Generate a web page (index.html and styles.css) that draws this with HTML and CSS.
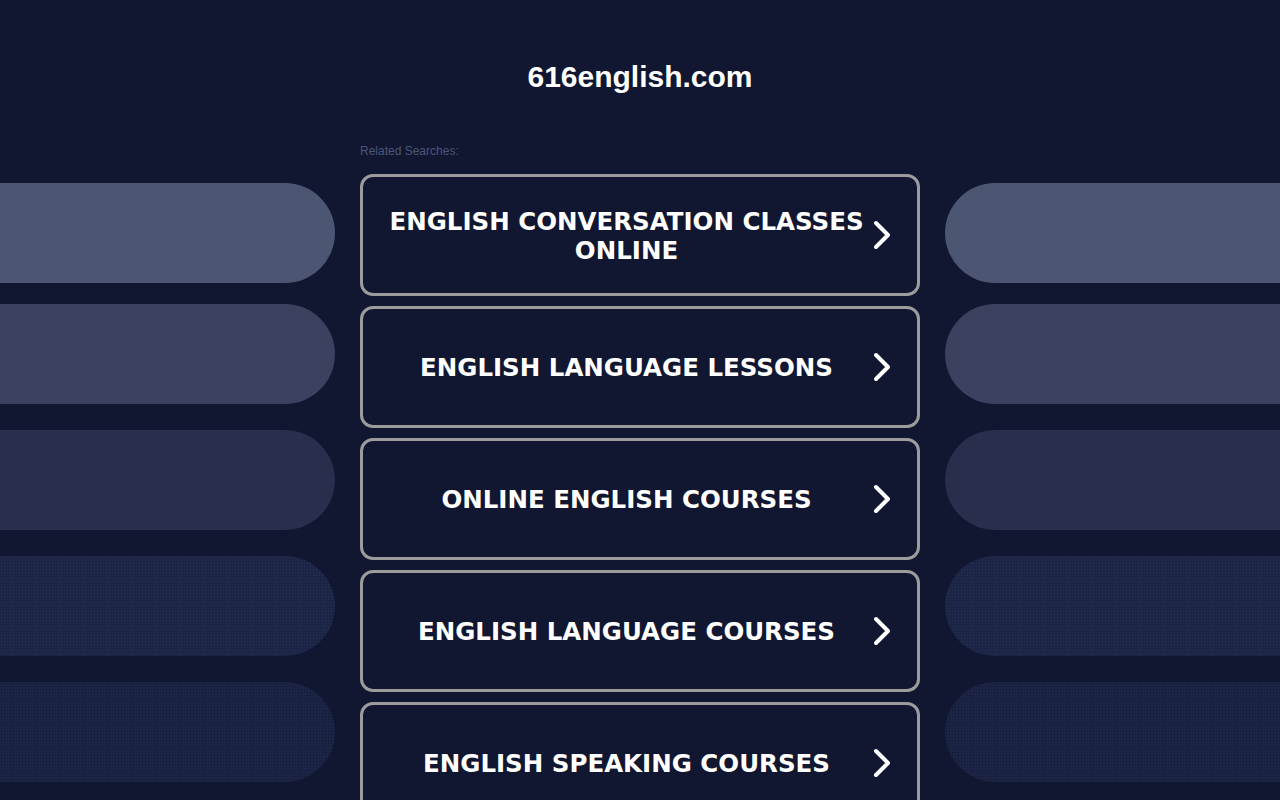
FILE: index.html
```html
<!DOCTYPE html>
<html>
<head>
<meta charset="utf-8">
<link rel="stylesheet" href="styles.css">
</head>
<body>
<div class="page">
  <div class="side side-left">
    <div class="pill p1"></div>
    <div class="pill p2"></div>
    <div class="pill p3"></div>
    <div class="pill p4"></div>
    <div class="pill p5"></div>
  </div>
  <main class="center">
    <h1 class="title">616english.com</h1>
    <div class="related">Related Searches:</div>
    <div class="list">
      <a class="item" href="#"><span class="label">ENGLISH CONVERSATION CLASSES ONLINE</span><svg class="chev" viewBox="0 0 24 32"><path d="M6 4 L18 16 L6 28"/></svg></a>
      <a class="item" href="#"><span class="label">ENGLISH LANGUAGE LESSONS</span><svg class="chev" viewBox="0 0 24 32"><path d="M6 4 L18 16 L6 28"/></svg></a>
      <a class="item" href="#"><span class="label">ONLINE ENGLISH COURSES</span><svg class="chev" viewBox="0 0 24 32"><path d="M6 4 L18 16 L6 28"/></svg></a>
      <a class="item" href="#"><span class="label">ENGLISH LANGUAGE COURSES</span><svg class="chev" viewBox="0 0 24 32"><path d="M6 4 L18 16 L6 28"/></svg></a>
      <a class="item" href="#"><span class="label">ENGLISH SPEAKING COURSES</span><svg class="chev" viewBox="0 0 24 32"><path d="M6 4 L18 16 L6 28"/></svg></a>
    </div>
  </main>
  <div class="side side-right">
    <div class="pill p1"></div>
    <div class="pill p2"></div>
    <div class="pill p3"></div>
    <div class="pill p4"></div>
    <div class="pill p5"></div>
  </div>
</div>
</body>
</html>
```
FILE: styles.css
```css
html, body {
  margin: 0;
  padding: 0;
  background: #111730;
  height: 100%;
  overflow: hidden;
}
.page {
  display: grid;
  grid-template-columns: 335px 560px 335px;
  column-gap: 25px;
  width: 1280px;
}
.side {
  display: flex;
  flex-direction: column;
  padding-top: 183px;
}
.pill {
  height: 100px;
  flex: none;
}
.side-left .pill { border-radius: 0 50px 50px 0; }
.side-right .pill { border-radius: 50px 0 0 50px; }
.pill.p2 { margin-top: 21px; }
.pill.p3, .pill.p4, .pill.p5 { margin-top: 26px; }
.p1 { background: #4c5672; }
.p2 { background: #3a4260; }
.p3 { background: #272f4d; }
.p4 {
  background-color: #1c2546;
  background-image: radial-gradient(circle, rgba(60,75,115,0.35) 0.6px, transparent 1px);
  background-size: 3px 3px;
}
.p5 {
  background-color: #1b2444;
  background-image: radial-gradient(circle, rgba(10,14,30,0.55) 0.6px, transparent 1px);
  background-size: 3px 3px;
}
.center {
  display: flex;
  flex-direction: column;
}
.title {
  margin: 61px 0 0;
  font-family: "Liberation Sans", Arial, sans-serif;
  font-weight: bold;
  font-size: 30px;
  line-height: 32px;
  color: #ffffff;
  text-align: center;
}
.related {
  margin-top: 51px;
  font-family: "Liberation Sans", Arial, sans-serif;
  font-size: 12px;
  line-height: 14px;
  color: #4b5679;
}
.list {
  margin-top: 16px;
  display: flex;
  flex-direction: column;
  gap: 10px;
}
.item {
  box-sizing: border-box;
  height: 122px;
  border: 3px solid #9c9c9c;
  border-radius: 13px;
  display: flex;
  align-items: center;
  padding: 0 23px 0 20px;
  text-decoration: none;
  color: #ffffff;
  background: #111730;
}
.label {
  flex: 1;
  text-align: center;
  font-family: "DejaVu Sans", Verdana, sans-serif;
  font-weight: bold;
  font-size: 24.5px;
  line-height: 29px;
  padding-top: 1px;
}
.chev {
  flex: none;
  width: 24px;
  height: 32px;
  fill: none;
  stroke: #ffffff;
  stroke-width: 4;
  stroke-linecap: round;
  stroke-linejoin: round;
}
```
